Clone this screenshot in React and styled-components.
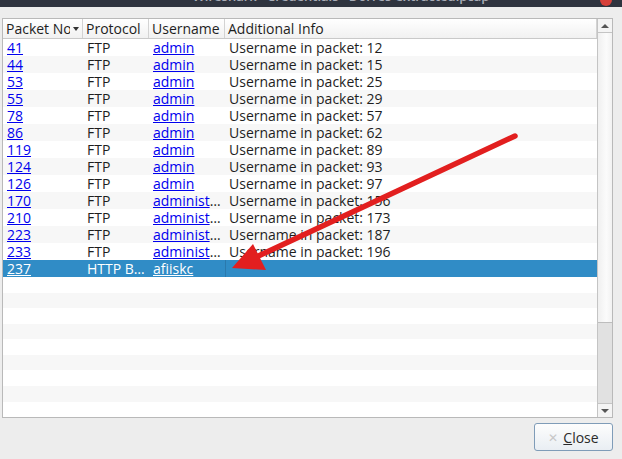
import React from "react";
import styled, { createGlobalStyle } from "styled-components";

const GlobalStyle = createGlobalStyle`
  html, body {
    margin: 0;
    padding: 0;
    background: #ededed;
    font-family: "Open Sans", "Noto Sans", sans-serif;
    font-size: 14px;
    color: #1e1e1e;
  }
`;

const Window = styled.div`
  position: relative;
  width: 622px;
  height: 459px;
  overflow: hidden;
  background: #ededed;
`;

const TitleBar = styled.div`
  height: 7px;
  background: #2f343f;
  overflow: hidden;
  position: relative;
  text-align: center;
  span {
    display: block;
    margin-top: -12px;
    margin-left: 60px;
    color: #a9adb8;
    font-weight: 600;
    font-size: 13px;
    line-height: 16px;
  }
`;

const CloseDot = styled.div`
  position: absolute;
  right: 10px;
  top: -6px;
  width: 12px;
  height: 12px;
  border-radius: 50%;
  background: #d7403a;
`;

const Body = styled.div`
  padding: 11px 9px 0 2px;
`;

const Frame = styled.div`
  height: 398px;
  border: 1px solid #b9b9b9;
  display: grid;
  grid-template-columns: 1fr 15px;
  background: #fff;
`;

const Table = styled.div`
  display: flex;
  flex-direction: column;
  overflow: hidden;
`;

const cols = "80px 66px 76px 1fr";

const Header = styled.div`
  display: grid;
  grid-template-columns: ${cols};
  height: 19px;
  border-bottom: 1px solid #c9c9c9;
  background: linear-gradient(#ffffff, #f1f1f1);
`;

const HeadCell = styled.div`
  display: flex;
  align-items: center;
  padding-left: 3px;
  border-right: 1px solid #d3d3d3;
  white-space: nowrap;
  overflow: hidden;
  position: relative;
  line-height: 19px;
`;

const SortMark = styled.span`
  position: absolute;
  right: 0;
  top: 0;
  width: 12px;
  height: 19px;
  background: linear-gradient(#ffffff, #f1f1f1);
  &::after {
    content: "";
    position: absolute;
    left: 3px;
    top: 8px;
    border-left: 3px solid transparent;
    border-right: 3px solid transparent;
    border-top: 4px solid #333;
  }
`;

const Row = styled.div`
  display: grid;
  grid-template-columns: ${cols};
  height: 17.15px;
  line-height: 17px;
  background: ${(p) => (p.$selected ? "#308cc6" : p.$alt ? "#f7f7f7" : "#fff")};
  color: ${(p) => (p.$selected ? "#fff" : "#1e1e1e")};
`;

const Cell = styled.div`
  padding: 0 3px 0 4px;
  white-space: nowrap;
  overflow: hidden;
  text-overflow: ellipsis;
  ${(p) => p.$focus && `border-left: 1px solid #2a79ad; padding-left: 3px;`}
`;

const Link = styled.span`
  color: ${(p) => (p.$light ? "#fff" : "#0000ee")};
  text-decoration: underline;
`;

const Scrollbar = styled.div`
  display: flex;
  flex-direction: column;
  border-left: 1px solid #c4c4c4;
  background: linear-gradient(90deg, #f0f0f0, #fbfbfb 60%, #f2f2f2);
`;

const ScrollButton = styled.div`
  height: 13px;
  display: flex;
  align-items: center;
  justify-content: center;
  border-top: ${(p) => (p.$down ? "1px solid #c4c4c4" : "none")};
  border-bottom: ${(p) => (p.$down ? "none" : "1px solid #c4c4c4")};
  background: #f4f4f4;
  &::after {
    content: "";
    border-left: 4px solid transparent;
    border-right: 4px solid transparent;
    ${(p) =>
      p.$down ? "border-top: 4px solid #555;" : "border-bottom: 4px solid #555;"}
  }
`;

const Track = styled.div`
  flex: 1;
  display: flex;
  flex-direction: column;
  justify-content: flex-end;
`;

const Thumb = styled.div`
  height: 80px;
  background: #e1e1e1;
  border-top: 1px solid #bdbdbd;
`;

const Footer = styled.div`
  display: flex;
  justify-content: flex-end;
  padding: 5px 9px 0 0;
`;

const Button = styled.button`
  width: 79px;
  height: 28px;
  display: flex;
  align-items: center;
  justify-content: center;
  gap: 5px;
  border: 1px solid #7f9cb8;
  border-radius: 3px;
  background: linear-gradient(#fdfdfd, #e9eef3);
  font: inherit;
  font-size: 14px;
  color: #2a2a2a;
  padding: 0;
  u {
    text-decoration: underline;
  }
`;

const XMark = styled.span`
  color: #c7c7c7;
  font-size: 12px;
`;

const Annotation = styled.svg`
  position: absolute;
  left: 0;
  top: 0;
  pointer-events: none;
`;

const rows = [
  ["41", "FTP", "admin", "Username in packet: 12"],
  ["44", "FTP", "admin", "Username in packet: 15"],
  ["53", "FTP", "admin", "Username in packet: 25"],
  ["55", "FTP", "admin", "Username in packet: 29"],
  ["78", "FTP", "admin", "Username in packet: 57"],
  ["86", "FTP", "admin", "Username in packet: 62"],
  ["119", "FTP", "admin", "Username in packet: 89"],
  ["124", "FTP", "admin", "Username in packet: 93"],
  ["126", "FTP", "admin", "Username in packet: 97"],
  ["170", "FTP", "administrator", "Username in packet: 156"],
  ["210", "FTP", "administrator", "Username in packet: 173"],
  ["223", "FTP", "administrator", "Username in packet: 187"],
  ["233", "FTP", "administrator", "Username in packet: 196"],
  ["237", "HTTP Basic Auth", "afiiskc", ""],
];

export default function App() {
  const blanks = Array.from({ length: 9 });
  return (
    <Window>
      <GlobalStyle />
      <TitleBar>
        <span>Wireshark · Credentials · Dorres-extracted.pcap</span>
        <CloseDot />
      </TitleBar>
      <Body>
        <Frame>
          <Table>
            <Header>
              <HeadCell>
                Packet No.
                <SortMark />
              </HeadCell>
              <HeadCell>Protocol</HeadCell>
              <HeadCell>Username</HeadCell>
              <HeadCell>Additional Info</HeadCell>
            </Header>
            {rows.map((r, i) => {
              const selected = r[0] === "237";
              return (
                <Row key={r[0]} $alt={i % 2 === 1} $selected={selected}>
                  <Cell>
                    <Link $light={selected}>{r[0]}</Link>
                  </Cell>
                  <Cell>{r[1]}</Cell>
                  <Cell>
                    <Link $light={selected}>{r[2]}</Link>
                  </Cell>
                  <Cell $focus={selected}>{r[3]}</Cell>
                </Row>
              );
            })}
            {blanks.map((_, i) => (
              <Row key={"b" + i} $alt={(rows.length + i) % 2 === 1}>
                <Cell />
                <Cell />
                <Cell />
                <Cell />
              </Row>
            ))}
          </Table>
          <Scrollbar>
            <ScrollButton />
            <Track>
              <Thumb />
            </Track>
            <ScrollButton $down />
          </Scrollbar>
        </Frame>
      </Body>
      <Footer>
        <Button>
          <XMark>✕</XMark>
          <span>
            <u>C</u>lose
          </span>
        </Button>
      </Footer>
      <Annotation width="622" height="459" viewBox="0 0 622 459">
        <line
          x1="515"
          y1="136"
          x2="252"
          y2="259"
          stroke="#e21f1f"
          strokeWidth="5.5"
          strokeLinecap="round"
        />
        <polygon points="232,268 253,244 266,270" fill="#e21f1f" />
      </Annotation>
    </Window>
  );
}
